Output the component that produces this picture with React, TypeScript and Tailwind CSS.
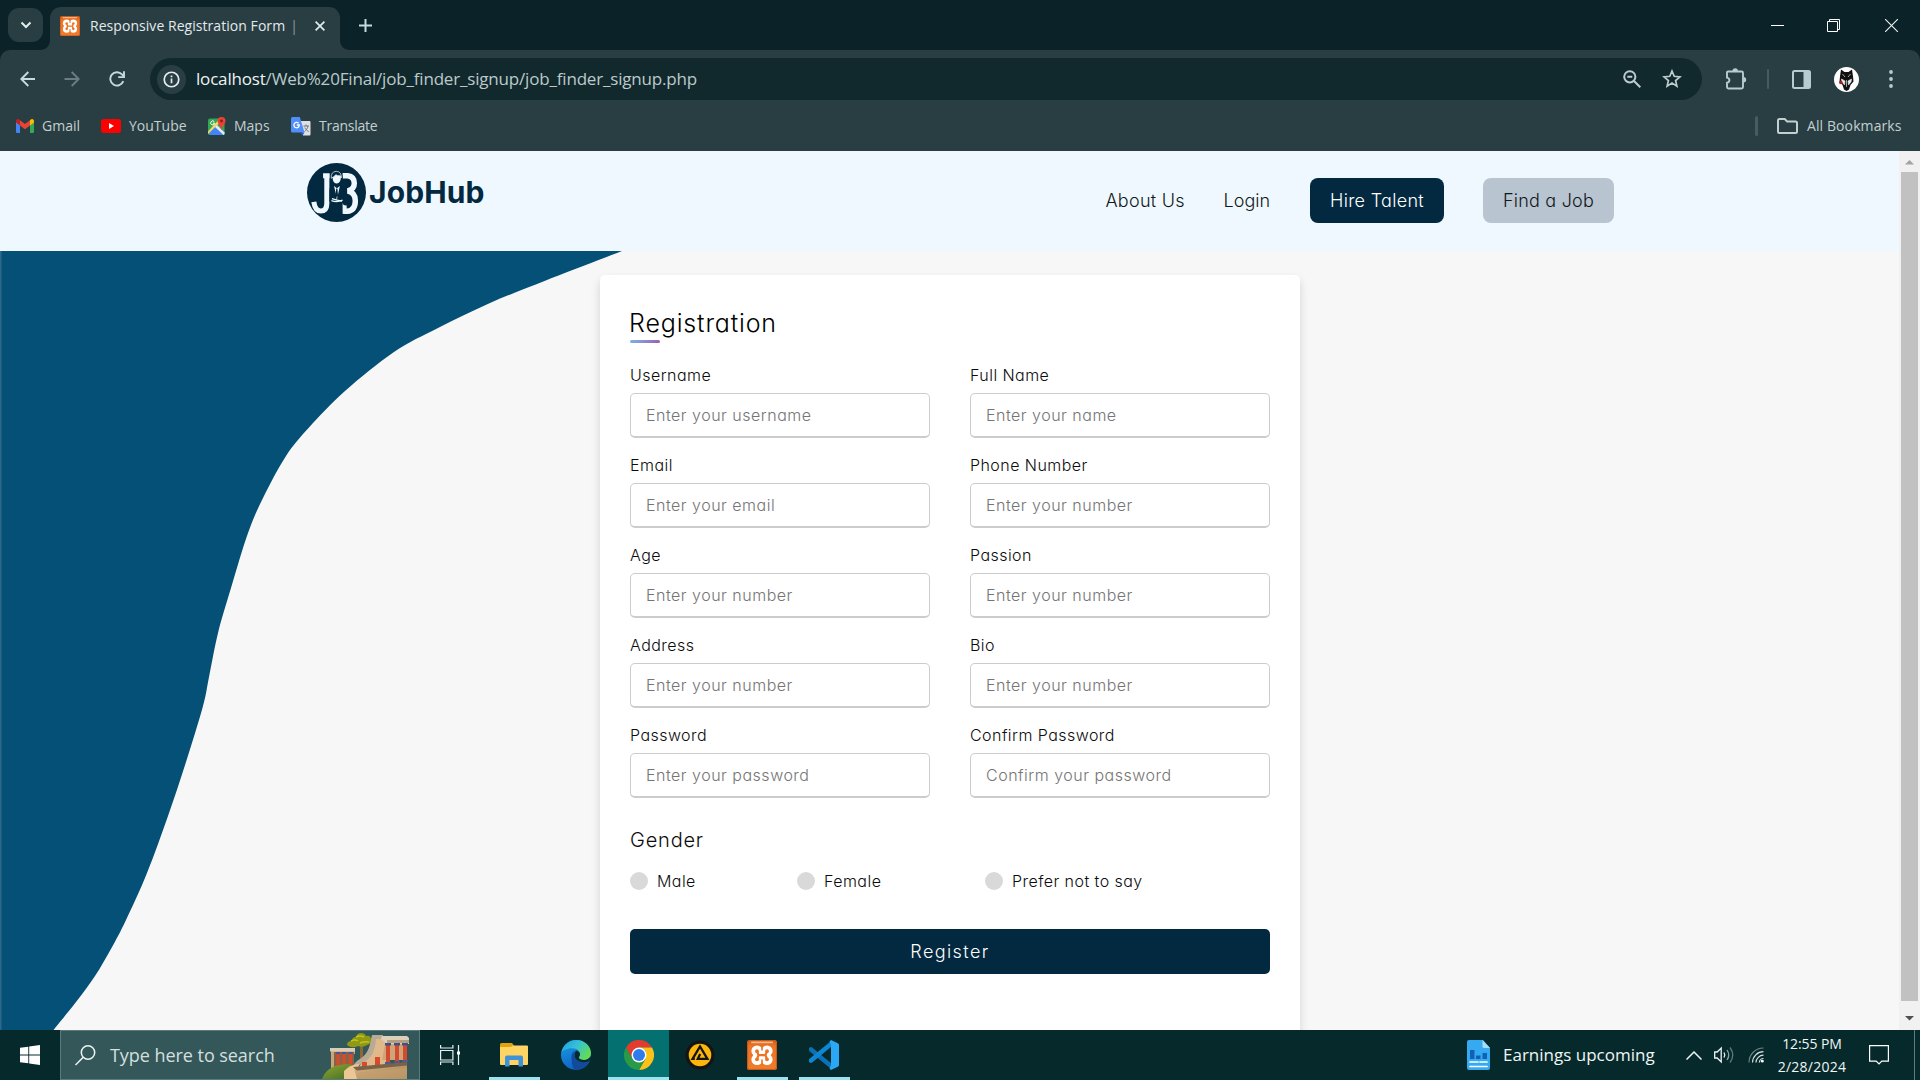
import type { ReactNode } from "react";

/* ---------- shared ---------- */

type Point = [number, number];

/** Smooth open curve through the given points. */
function smooth(points: Point[]): string {
  const at = (i: number) => points[Math.max(0, Math.min(points.length - 1, i))];
  let d = `M${points[0][0]} ${points[0][1]}`;
  for (let i = 0; i < points.length - 1; i++) {
    const [p0, p1, p2, p3] = [at(i - 1), at(i), at(i + 1), at(i + 2)];
    d += ` C${p1[0] + (p2[0] - p0[0]) / 6} ${p1[1] + (p2[1] - p0[1]) / 6} ${p2[0] - (p3[0] - p1[0]) / 6} ${p2[1] - (p3[1] - p1[1]) / 6} ${p2[0]} ${p2[1]}`;
  }
  return d;
}

function XamppIcon({ className }: { className: string }) {
  return (
    <svg viewBox="0 0 30 30" className={className}>
      <defs>
        <linearGradient id="xampp" x1="0" y1="0" x2="0" y2="1">
          <stop offset="0" stopColor="#c9601f" />
          <stop offset="0.2" stopColor="#ee7424" />
          <stop offset="1" stopColor="#f07c2c" />
        </linearGradient>
      </defs>
      <rect width="30" height="30" rx="2.5" fill="url(#xampp)" />
      <rect x="0.6" y="0.6" width="28.8" height="28.8" rx="2.2" fill="none" stroke="#c4561a" strokeWidth="1" />
      <rect x="4" y="1.6" width="22" height="1.6" rx="0.8" fill="#f7b586" />
      <g fill="#fff">
        <circle cx="10" cy="11" r="5.6" />
        <circle cx="20" cy="11" r="5.6" />
        <circle cx="10" cy="19.5" r="5.6" />
        <circle cx="20" cy="19.5" r="5.6" />
        <rect x="6" y="12" width="18" height="6.5" />
      </g>
      <g fill="#ee7424">
        <circle cx="10" cy="11.2" r="1.9" />
        <circle cx="20" cy="11.2" r="1.9" />
        <circle cx="10" cy="19.3" r="1.9" />
        <circle cx="20" cy="19.3" r="1.9" />
        <circle cx="4.6" cy="15.2" r="1" />
        <circle cx="25.4" cy="15.2" r="1" />
      </g>
      <path d="M10 11.2 11.5 15.2 10 19.3M20 11.2 18.5 15.2 20 19.3M11.5 15.2h7" fill="none" stroke="#ee7424" strokeWidth="2.2" />
      <path d="M15 5v5.600M15 25v-5.400" stroke="#ee7424" strokeWidth="1.600" />
    </svg>
  );
}

/* ---------- browser chrome ---------- */

function TabStrip() {
  return (
    <div className="flex h-[50px] items-end bg-[#0b2328]">
      <div className="mb-2 ml-2 flex h-[34px] w-[35px] items-center justify-center rounded-[11px] bg-[#293e43]">
        <svg viewBox="0 0 12 8" className="h-2 w-3 fill-none stroke-[#e4ecee] stroke-2">
          <path d="M1.500 1.500 6 6l4.500-4.500" />
        </svg>
      </div>
      <svg viewBox="0 0 10 10" className="ml-[-3px] size-[10px] fill-[#293e43]">
        <path d="M10 0v10H0C6 10 10 6 10 0Z" />
      </svg>
      <div className="flex h-[43px] w-[290px] items-center rounded-t-[11px] bg-[#293e43] pb-[6px] pt-0">
        <XamppIcon className="ml-[10px] size-5 shrink-0" />
        <div className="ml-[10px] w-[215px] shrink-0 overflow-hidden whitespace-nowrap text-[14px] leading-5 tracking-[0.05px] text-[#e3eaeb]">
          Responsive Registration Form<span className="ml-[5px] text-[#8e9a9d]">|</span>
        </div>
        <svg viewBox="0 0 10 10" className="ml-[10px] size-[10px] shrink-0 stroke-[#e4ecee] stroke-[1.7]">
          <path d="m.6.6 8.800 8.800M9.400.6.6 9.400" />
        </svg>
      </div>
      <svg viewBox="0 0 10 10" className="size-[10px] fill-[#293e43]">
        <path d="M0 0v10h10C4 10 0 6 0 0Z" />
      </svg>
      <svg viewBox="0 0 13 13" className="mb-[18px] ml-[9px] size-[13px] stroke-[#c3dbe0] stroke-2">
        <path d="M6.500 0v13M0 6.500h13" />
      </svg>
      <div className="mb-[18px] ml-auto mr-[22px] flex items-center gap-[43px]">
        <svg viewBox="0 0 13 13" className="size-[13px] stroke-white stroke-1">
          <path d="M0 6.500h13" />
        </svg>
        <svg viewBox="0 0 13 13" className="size-[13px] fill-none stroke-white stroke-1">
          <path d="M.5 2.500h10v10H.5zM2.500 2.500v-2h10v10h-2" />
        </svg>
        <svg viewBox="0 0 13 13" className="ml-[2px] size-[13px] stroke-[#eef2f2] stroke-[1.1]">
          <path d="m0 0 13 13M13 0 0 13" />
        </svg>
      </div>
    </div>
  );
}

function Toolbar() {
  return (
    <div className="bg-[#0b2328]">
      <div className="flex h-[58px] items-center rounded-t-[10px] bg-[#293e43]">
        <svg viewBox="0 0 16 16" className="ml-5 size-4 shrink-0 fill-none stroke-[#c3dbe0] stroke-[1.9]">
          <path d="M15 8H1.600M8.300 1 1.300 8l7 7" />
        </svg>
        <svg viewBox="0 0 16 16" className="ml-[28px] size-4 shrink-0 fill-none stroke-[#6b7d81] stroke-[1.9]">
          <path d="M.5 8h13.900M7.700 1l7 7-7 7" />
        </svg>
        <svg viewBox="0 0 16 16" className="ml-[29px] size-4 shrink-0 fill-none stroke-[#c3dbe0] stroke-[1.9]">
          <path d="M14.300 10.200A6.700 6.700 0 1 1 13 3.400l1.800 2" />
          <path d="M15 .2v5.900H9.200" />
        </svg>
        <div className="ml-[25px] flex h-[42px] w-[1552px] shrink-0 items-center rounded-full bg-[#11292d]">
          <div className="ml-[7px] flex size-[29px] shrink-0 items-center justify-center rounded-full bg-[#293e43]">
            <svg viewBox="0 0 18 18" className="size-[17px] fill-none stroke-[#e6ecee] stroke-[1.8]">
              <circle cx="9" cy="9" r="7.700" />
              <path d="M9 8v5M9 4.800v1.900" />
            </svg>
          </div>
          <div className="ml-[10px] whitespace-nowrap text-[17px] leading-6 tracking-[-0.18px] text-[#bcc9cb]">
            <span className="text-[#eef2f3]">localhost</span>/Web%20Final/job_finder_signup/job_finder_signup.php
          </div>
          <svg viewBox="0 0 18 18" className="ml-auto size-[18px] fill-none stroke-[#bccbcd] stroke-2">
            <circle cx="6.800" cy="6.800" r="5.600" />
            <path d="m11 11 6.300 6.300M4.300 6.800h5" />
          </svg>
          <svg viewBox="0 0 20 20" className="ml-[21px] mr-[20px] size-5 fill-none stroke-[#bccbcd] stroke-[1.7]">
            <path d="m10 2 2.200 5.300 5.700.5-4.300 3.700 1.300 5.600-4.900-3-4.900 3 1.300-5.600L2.100 7.800l5.700-.5Z" />
          </svg>
        </div>
        <svg viewBox="0 0 22 22" className="ml-[23px] size-[22px] shrink-0">
          <path
            d="M3 3.500h13.500A1.500 1.500 0 0 1 18 5v14a1.500 1.500 0 0 1-1.500 1.500H3.500A1.500 1.500 0 0 1 2 19v-4.200c3.200-.6 3.200-4.600 0-5.200V4.500a1 1 0 0 1 1-1Z"
            fill="none"
            stroke="#b5cdd2"
            strokeWidth="1.900"
          />
          <path d="M7.500 3a2.700 2.700 0 0 1 5.400 0ZM18.500 9a2.700 2.700 0 0 1 0 5.400Z" fill="#b5cdd2" />
        </svg>
        <div className="ml-[20px] h-5 w-[2px] shrink-0 rounded bg-[#465c61]" />
        <svg viewBox="0 0 19 19" className="ml-[23px] size-[19px] shrink-0">
          <rect x="1" y="1" width="17" height="17" rx="1.500" fill="none" stroke="#b5cdd2" strokeWidth="2" />
          <path d="M11.500 1H18v17h-6.500z" fill="#b5cdd2" />
        </svg>
        <svg viewBox="0 0 25 25" className="ml-[23px] size-[25px] shrink-0">
          <circle cx="12.500" cy="12.500" r="12.500" fill="#fff" />
          <path d="M7 2.500 10.500 5h4L18 2.500l1 7 .5 5-3 3.500-1.500 4.500-2.500 1.500L10 22.500 8.500 18l-3-3.500.5-5Z" fill="#111" />
          <path d="m7.500 12 3.500 2-.5 4-2.500-3ZM17.500 12 14 14l.5 4 2.500-3ZM8.500 7l2.500 3M16.500 7 14 10M12.500 13v7" fill="#eee" stroke="#ddd" strokeWidth=".7" />
          <circle cx="6.800" cy="15.500" r="1.800" fill="#a32020" />
        </svg>
        <svg viewBox="0 0 4 18" className="ml-[30px] h-[18px] w-1 shrink-0 fill-[#b5cdd2]">
          <circle cx="2" cy="2" r="1.900" />
          <circle cx="2" cy="9" r="1.900" />
          <circle cx="2" cy="16" r="1.900" />
        </svg>
      </div>
    </div>
  );
}

function BookmarksBar() {
  return (
    <div className="flex h-[43px] items-center whitespace-nowrap bg-[#293e43] pb-[7px] text-[14px] leading-5 text-[#c3cfd1]">
      <svg viewBox="0 0 18 14" className="ml-4 h-[14px] w-[18px]">
        <path d="M0 2.500V13a1 1 0 0 0 1 1h3V5.500Z" fill="#4285f4" />
        <path d="M18 2.500V13a1 1 0 0 1-1 1h-3V5.500Z" fill="#34a853" />
        <path d="M14 1.200V6.500l4-3V2a2 2 0 0 0-3.200-1.500Z" fill="#fbbc04" />
        <path d="M4 6.500V1.200l5 3.800 5-3.800v5.300l-5 3.800Z" fill="#ea4335" />
        <path d="M0 2v1.500l4 3V1.200L3.200.5A2 2 0 0 0 0 2Z" fill="#c5221f" />
      </svg>
      <span className="ml-2 w-[43px]">Gmail</span>
      <svg viewBox="0 0 20 14" className="ml-4 h-[14px] w-5">
        <rect width="20" height="14" rx="3" fill="#f00" />
        <path d="m8 4 5 3-5 3Z" fill="#fff" />
      </svg>
      <span className="ml-2 w-[63px]">YouTube</span>
      <svg viewBox="0 0 18 18" className="ml-4 size-[18px]">
        <rect y="1.500" width="16.500" height="16.500" rx="2" fill="#34a853" />
        <path d="M0 16 8.500 8 16.500 15v1.500L15 18H2Z" fill="#4285f4" />
        <path d="M0 14.500V17L13 4.500 10.500 3Z" fill="#fdd663" />
        <path d="m7 10 2-2 7.500 7.500V17a1 1 0 0 1-1 1Z" fill="#e8eaed" />
        <path d="M13.500 0a4 4 0 0 1 4 4c0 2.600-3 4-3.500 8.500h-1C12.500 8 9.500 6.600 9.500 4a4 4 0 0 1 4-4Z" fill="#ea4335" />
        <circle cx="13.500" cy="4" r="1.400" fill="#8c1d18" />
        <path d="M6.300 4.700a2 2 0 1 0 .4 1.500H4.800" fill="none" stroke="#fff" strokeWidth="1" />
      </svg>
      <span className="ml-[8px] w-[41px]">Maps</span>
      <svg viewBox="0 0 20 19" className="ml-[16px] h-[19px] w-5">
        <path d="M9 4h9.500a1 1 0 0 1 1 1v12.500a1 1 0 0 1-1 1H12Z" fill="#dfe1e5" />
        <path d="M1.500 0h7.300l4.700 15.500h-12A1.500 1.500 0 0 1 0 14V1.500A1.500 1.500 0 0 1 1.500 0Z" fill="#4f8ff7" />
        <path d="m9 15.500h4.500l-2 3Z" fill="#2a56c6" />
        <path d="M7.600 6.300A2.700 2.700 0 1 0 8.300 8H5.800" fill="none" stroke="#fff" strokeWidth="1.300" />
        <path d="M12.500 9h5.500M15 7.500V9M17 9c-.5 2.500-2 4.500-3.500 5.500M13.800 10.500c.8 1.800 2.200 3.200 4 4" fill="none" stroke="#70767c" strokeWidth="1" />
      </svg>
      <span className="ml-[8px] tracking-[-0.25px]">Translate</span>
      <div className="ml-auto h-5 w-[3px] rounded bg-[#465c61]" />
      <svg viewBox="0 0 21 16" className="ml-[19px] h-4 w-[21px] fill-none stroke-[#c3cfd1] stroke-2">
        <path d="M2.500 1h5.200l2.500 2.500h8.300A1.500 1.500 0 0 1 20 5v8.500a1.500 1.500 0 0 1-1.500 1.500h-16A1.500 1.500 0 0 1 1 13.500v-11A1.500 1.500 0 0 1 2.500 1Z" />
      </svg>
      <span className="ml-[9px] mr-[18px] w-[95px] tracking-[0.1px]">All Bookmarks</span>
    </div>
  );
}

/* ---------- web page ---------- */

function JobHubLogo() {
  return (
    <svg viewBox="0 0 58 58" className="size-[59px]">
      <circle cx="29" cy="29" r="29" fill="#02293f" />
      <g fill="none" stroke="#f0f8ff">
        <path d="M15.800 12.500h6.500M19.500 10.200v29q0 8-6 8-5.500 0-6.800-9" strokeWidth="5" />
        <path d="M35 12.500h5q6.500.7 6.500 7.500 0 6-6.500 7.500 7.500 1.500 7.500 9.500 0 9.500-8 10.500h-3.500" strokeWidth="5.400" />
        <path d="M37 39v11" strokeWidth="4" />
      </g>
      <path d="M22 27q0-4.500 5.500-6t8.500 6l.5 11-3.500 2H25l-3-2Z" fill="#02293f" />
      <circle cx="37.500" cy="20.700" r="4.200" fill="#02293f" />
      <circle cx="38.500" cy="37.500" r="4.200" fill="#02293f" />
      <circle cx="29" cy="14" r="6" fill="#02293f" />
      <path d="M25 13.500q0-3.500 3.800-4t4.700 3.500l-.6 4q-1.400 3.200-3.800 3.200t-3.600-3.200Z" fill="#f0f8ff" />
      <path d="M23.800 15q-.5-6.500 5-6.800 5.200.3 5 6.300l-1-2q-3 .5-4.500-1-1.500 2-4.500 3.500Z" fill="#02293f" stroke="#f0f8ff" strokeWidth=".7" />
      <path d="m26.500 22.500 2 8 .7 6.500 1.500-7 1.600-7.500-2.800 2.300Z" fill="#f0f8ff" />
      <path d="M28.700 25h1.200l.6 7-1.100 2.500-1.200-2.500Z" fill="#02293f" />
      <path d="M24 37q5.500 2 11-.5M24.500 35q5 1.500 10 2.500" fill="none" stroke="#f0f8ff" strokeWidth="1.200" />
    </svg>
  );
}

function SiteHeader() {
  return (
    <header className="flex h-[100px] w-full shrink-0 items-start bg-[#f0f8ff] text-[18px] font-light leading-[45px] text-[#101820]">
      <div className="ml-[307px] mt-[12px] flex items-center">
        <JobHubLogo />
        <span className="ml-[3px] mt-[-1px] text-[30px] font-bold leading-[40px] tracking-[0.1px] text-[#02293f]">JobHub</span>
      </div>
      <nav className="ml-auto mr-[285px] mt-[27px] flex whitespace-nowrap">
        <a className="w-[118px] tracking-[0.25px]">About Us</a>
        <a className="w-[86.5px] tracking-[0.05px]">Login</a>
        <a className="mr-[39px] w-[134px] rounded-[8px] bg-[#02293f] text-center tracking-[0.3px] text-white">Hire Talent</a>
        <a className="w-[131px] rounded-[8px] bg-[#b8c4d0] text-center tracking-[0.2px]">Find a Job</a>
      </nav>
    </header>
  );
}

const WAVE: Point[] = [
  [622, 0], [547, 29], [490, 52], [438, 77], [394, 101], [345, 140], [309, 176.5], [286, 205], [263, 247], [248, 282],
  [231, 337], [218, 382], [209, 426], [203, 455], [186, 511], [168, 565], [147, 622], [126, 669], [111.5, 697],
  [95, 725], [76, 751], [53.5, 779],
];

function Wave() {
  return (
    <svg viewBox="0 0 640 779" className="absolute left-0 top-0 h-[779px] w-[640px]">
      <path d={`${smooth(WAVE)} L0 779 L0 0 Z`} fill="#045076" />
      <path d="M0 0h1.500v779H0z" fill="#2c688a" />
    </svg>
  );
}

const FIELDS = [
  ["Username", "Enter your username"],
  ["Full Name", "Enter your name"],
  ["Email", "Enter your email"],
  ["Phone Number", "Enter your number"],
  ["Age", "Enter your number"],
  ["Passion", "Enter your number"],
  ["Address", "Enter your number"],
  ["Bio", "Enter your number"],
  ["Password", "Enter your password"],
  ["Confirm Password", "Confirm your password"],
];

function Field({ label, placeholder }: { label: string; placeholder: string }) {
  return (
    <label className="block">
      <span className="mb-[6px] block h-6 leading-6 tracking-[0.45px]">{label}</span>
      <input
        placeholder={placeholder}
        className="block h-[45px] w-[300px] rounded-[5px] border border-b-2 border-[#ccc] bg-white pb-px pl-[15px] tracking-[0.5px] placeholder:text-[#757575] placeholder:opacity-100"
      />
    </label>
  );
}

function Radio({ label, className }: { label: string; className: string }) {
  return (
    <label className={className}>
      <span className="size-[18px] shrink-0 rounded-full bg-[#d9d9d9]" />
      <span className="ml-[9px]">{label}</span>
    </label>
  );
}

function RegistrationCard() {
  return (
    <form className="relative ml-[600px] mt-6 h-[800px] w-[700px] shrink-0 rounded-[5px] bg-white px-[30px] pt-[30px] text-[16px] font-light text-[#0c0c0c] shadow-[0_5px_10px_rgba(0,0,0,0.15)]">
      <h1 className="relative mb-5 h-[38px] text-[25px] leading-9 tracking-[0.85px] text-black after:absolute after:bottom-0 after:left-0 after:h-[3px] after:w-[30px] after:rounded-[5px] after:bg-linear-135 after:from-[#71b7e6] after:to-[#9b59b6]">
        <span className="-ml-px">Registration</span>
      </h1>
      <div className="grid grid-cols-[300px_300px] gap-x-10 gap-y-[15px]">
        {FIELDS.map(([label, placeholder]) => (
          <Field key={label} label={label} placeholder={placeholder} />
        ))}
      </div>
      <h2 className="mt-[28px] h-7 text-[20px] leading-7 tracking-[0.8px]">Gender</h2>
      <div className="mt-[15px] flex h-6 items-center whitespace-nowrap tracking-[0.45px]">
        <Radio label="Male" className="flex w-[167px] items-center" />
        <Radio label="Female" className="flex w-[188px] items-center" />
        <Radio label="Prefer not to say" className="flex items-center" />
      </div>
      <button type="button" className="mt-9 block h-[45px] w-full rounded-[5px] bg-[#02293f] text-[18px] font-light tracking-[1.4px] text-white">
        Register
      </button>
    </form>
  );
}

function ScrollBar() {
  return (
    <div className="flex w-[21px] shrink-0 flex-col items-center bg-[#f1f1f1]">
      <svg viewBox="0 0 21 21" className="size-[21px] shrink-0 fill-[#a3a3a3]">
        <path d="m6 13.500 4.500-4.500 4.500 4.500Z" />
      </svg>
      <div className="w-[17px] flex-1 bg-[#c1c1c1]" />
      <svg viewBox="0 0 21 29" className="h-[29px] w-[21px] shrink-0 fill-[#505050]">
        <path d="m6 15 4.500 4.500L15 15Z" />
      </svg>
    </div>
  );
}

/* ---------- taskbar ---------- */

function SearchArt() {
  return (
    <svg viewBox="0 0 88 48" className="mr-[9px] h-12 w-[88px] shrink-0 self-end">
      <defs>
        <linearGradient id="hill" x1="0" y1="0" x2="1" y2="1">
          <stop offset="0" stopColor="#8fa832" />
          <stop offset="1" stopColor="#3f6a22" />
        </linearGradient>
        <linearGradient id="wall" x1="0" y1="0" x2="1" y2="1">
          <stop offset="0" stopColor="#d9b886" />
          <stop offset="1" stopColor="#a57f52" />
        </linearGradient>
      </defs>
      <path d="M9 18h24v5H31v15H9Z" fill="#c9a676" />
      <path d="M8 17h25v3.500H8Z" fill="#d9cdb8" />
      <path d="M12 21h20v16H12Z" fill="#8a6248" />
      <path d="M14.500 21h3v15h-3zM20.500 21h3v15h-3zM27 21h3v14h-3z" fill="#d9492b" />
      <path d="M14 21h4v2h-4zM20 21h4v2h-4zM26.500 21h4v2h-4z" fill="#4a5596" />
      <path d="M38 14h3v16h-3z" fill="#8a6a30" />
      <path d="M25 14q0-4 5-4 0-4 4-4 1-4 5-4 4 0 5 3 5-1 5 4 1 4-4 5-4 3-9 1-6 3-11-1Z" fill="#8f9a12" />
      <path d="M29 10q4-2 7 0M34 6q4-2 8 0M38 12q5-2 9-1" stroke="#c5c21c" strokeWidth="1.500" fill="none" />
      <path d="M0 48Q5 33 28 33q8 4 8 15Z" fill="url(#hill)" />
      <path d="M50 5h15v29l-28 2 5-8Q47 22 50 5Z" fill="#e0b98a" />
      <path d="M50 4h11l-1 4h-6q-1 16-10 22-8 4-12 10l-3-1q4-9 9-11 10-6 12-24Z" fill="#b8aa94" />
      <path d="M60 5h25l2 2v6H65l-6-5Z" fill="#ddd0bb" />
      <path d="M65 9h22v3H65z" fill="#b3a083" />
      <path d="M63 13h22v16H60Z" fill="#cfa477" />
      <path d="M64 14h4v17h-4zM73 14h4v16h-4zM81 13h4v16h-4z" fill="#d34a2e" />
      <path d="M63 12h6v2.500h-6zM72 12h6v2.500h-6zM80 12h6v2.500h-6z" fill="#43508c" />
      <path d="M63 31h6v2h-6zM72 30h6v2h-6zM80 29h6v2h-6z" fill="#4d5a96" />
      <path d="M40 31h5v7h-5zM53 26h5v10h-5z" fill="#d9492b" />
      <path d="M22 48V40q5-6 15-7l-2 15Z" fill="#ecc695" />
      <path d="M32 37 85 32v16H35Z" fill="url(#wall)" />
      <path d="m31 36 54-5v3.500l-50 5Z" fill="#7a6248" />
      <path d="M38 42 85 37v11H38Z" fill="#c4a070" opacity=".6" />
    </svg>
  );
}

function ExplorerIcon() {
  return (
    <svg viewBox="0 0 28 24" className="h-6 w-7">
      <path d="M0 1.500A1.500 1.500 0 0 1 1.500 0H12l2 2.500V6H0Z" fill="#e0a30c" />
      <path d="M0 4h10.500l3-1.500H27a1 1 0 0 1 1 1V21a1 1 0 0 1-1 1H1a1 1 0 0 1-1-1Z" fill="#ffd463" />
      <path d="M5 23.500V14.500a2 2 0 0 1 2-2h14a2 2 0 0 1 2 2v9h-4.500V17h-9v6.500Z" fill="#3f92d8" />
    </svg>
  );
}

function EdgeIcon() {
  return (
    <svg viewBox="0 0 30 30" className="size-[30px]">
      <defs>
        <linearGradient id="edgeTop" x1="0" y1="0" x2="1" y2="0.6">
          <stop offset="0" stopColor="#1b9de2" />
          <stop offset="0.5" stopColor="#35c1d8" />
          <stop offset="1" stopColor="#62dc54" />
        </linearGradient>
        <linearGradient id="edgeLeft" x1="0" y1="0" x2="0.4" y2="1">
          <stop offset="0" stopColor="#1aa0e8" />
          <stop offset="1" stopColor="#0f62c4" />
        </linearGradient>
      </defs>
      <circle cx="15" cy="15" r="15" fill="url(#edgeLeft)" />
      <path d="M.5 12.500C2 5 8 0 15.500 0 24 0 30 6.500 30 13c0 4.500-3 7-7 7-3.200 0-5.200-1-5.200-2.200 0-1 1.200-1.500 1.200-3.600 0-3.200-3-6-7.500-6C6.500 8.200 2 10 .5 12.500Z" fill="url(#edgeTop)" />
      <path d="M10.500 17c0-3 1.500-5.200 3.700-6.200C12 14 13 21 21 22c3 .3 5.500-.6 7.500-2C26 26 21 30 15 30c-3 0-4.500-6-4.500-13Z" fill="#124a9c" />
      <path d="M17.800 17.800C17.800 19 20 20 23 20c3 0 5.500-1.500 6.500-4l.5 3-1.500 2c-2 1-4.500 1.500-7.500 1-5-.7-7.500-3.700-7.500-7 0-2.500 1-4 2-4.400 2.200.8 3.500 2 3.500 3.700 0 1.800-1.200 2.500-1.200 3.500Z" fill="#072a2c" />
    </svg>
  );
}

function ChromeIcon() {
  return (
    <svg viewBox="0 0 30 30" className="size-[30px]">
      <path d="M2 7.500A15 15 0 0 1 28 7.500H15L8.500 18.750Z" fill="#e33b2e" />
      <path d="M28 7.500A15 15 0 0 1 15 30l6.500-11.250L21.500 11 15 7.500Z" fill="#fbc116" />
      <path d="M15 30A15 15 0 0 1 2 7.500L8.500 18.750 15 22.500l6.500-3.750Z" fill="#2b9a46" />
      <circle cx="15" cy="15" r="7.500" fill="#fff" />
      <circle cx="15" cy="15" r="6" fill="#2f7bec" />
    </svg>
  );
}

function AimpIcon() {
  return (
    <svg viewBox="0 0 30 30" className="size-[30px]">
      <circle cx="15" cy="15" r="14.500" fill="#141414" />
      <circle cx="15" cy="15" r="11.300" fill="#fbb80a" />
      <path d="M9.800 18.800H7.600L15 6.500l7.400 12.300h-9.600l2.400-4.800" fill="none" stroke="#141414" strokeWidth="2.300" />
    </svg>
  );
}

function VsCodeIcon() {
  return (
    <svg viewBox="0 0 30 30" className="size-[30px]">
      <path d="m2 9.500 20 16.500" stroke="#0a70b8" strokeWidth="4.600" strokeLinecap="round" />
      <path d="M2 20.500 22 4" stroke="#0f86d2" strokeWidth="4.600" strokeLinecap="round" />
      <path d="M22 0 28.800 3.200A2 2 0 0 1 30 5v20a2 2 0 0 1-1.200 1.800L22 30l-1.500-1.500L22 25V5l-1.500-3.500Z" fill="#2ba7f3" />
    </svg>
  );
}

function TaskButton({ children, state }: { children: ReactNode; state: "idle" | "open" | "active" }) {
  return (
    <div className={state === "active" ? "flex h-full w-[61px] flex-col items-center bg-[#04706f]" : "flex h-full w-[62px] flex-col items-center"}>
      <div className="flex h-[47px] items-center pt-[3px]">{children}</div>
      {state === "open" && <div className="h-[3px] w-[51px] bg-[#9be4ef]" />}
      {state === "active" && <div className="h-[3px] w-full bg-[#9be4ef]" />}
    </div>
  );
}

function Taskbar() {
  return (
    <footer className="flex h-[50px] items-center whitespace-nowrap bg-[#062a2b] text-white">
      <svg viewBox="0 0 20 20" className="ml-5 size-5 shrink-0 fill-white">
        <path d="M0 2.800 8.300 1.700v7.800H0ZM9.200 1.500 20 0v9.500H9.200ZM0 10.400h8.300v7.900L0 17.200ZM9.200 10.400H20V20L9.200 18.500Z" />
      </svg>
      <div className="ml-5 flex h-[50px] w-[360px] shrink-0 items-center border border-[#5a7b7c] bg-[#345859]">
        <svg viewBox="0 0 21 21" className="ml-[14px] size-[21px] shrink-0 fill-none stroke-[#eef3f3] stroke-[1.5]">
          <circle cx="13" cy="7.500" r="6.700" />
          <path d="M8.200 12.300.5 20" />
        </svg>
        <span className="ml-[14px] text-[18px] leading-6 tracking-[-0.05px] text-[#d4dfdf]">Type here to search</span>
        <span className="flex-1" />
        <SearchArt />
      </div>
      <svg viewBox="0 0 20 20" className="ml-5 size-5 shrink-0 fill-none stroke-[#e8eeee] stroke-[1.2]">
        <path d="M.6 5.500h12.300v9.500H.6zM.6 0v3h12.300V0M.6 20v-3h12.300v3M18.500 0v20" />
        <path d="M17 6.500h3v3h-3z" fill="#fff" stroke="none" />
      </svg>
      <div className="ml-[23px] flex h-full">
        <TaskButton state="open"><ExplorerIcon /></TaskButton>
        <TaskButton state="idle"><EdgeIcon /></TaskButton>
        <div className="w-px" />
        <TaskButton state="active"><ChromeIcon /></TaskButton>
        <TaskButton state="idle"><AimpIcon /></TaskButton>
        <TaskButton state="open"><XamppIcon className="size-[30px]" /></TaskButton>
        <TaskButton state="open"><VsCodeIcon /></TaskButton>
      </div>
      <svg viewBox="0 0 24 30" className="ml-auto h-[30px] w-6 shrink-0">
        <path d="M2 0h14l7 8v20a2 2 0 0 1-2 2H2a2 2 0 0 1-2-2V2a2 2 0 0 1 2-2Z" fill="#36aaf0" />
        <path d="M15.500 0 23 8h-6a1.500 1.500 0 0 1-1.500-1.500Z" fill="#a8dcfa" />
        <path d="M3 10h4.500v9H3zM9 15.500h4.500V19H9zM15.500 13H20v6h-4.500z" fill="#0f62b8" />
        <path d="M3 22h8M13 22h7M3 26.500h17" stroke="#fff" strokeWidth="1.700" strokeLinecap="round" />
      </svg>
      <span className="ml-[12px] w-[157px] text-[17px] leading-6 text-[#f0f5f5]">Earnings upcoming</span>
      <svg viewBox="0 0 16 9" className="ml-[26px] h-[9px] w-4 shrink-0 fill-none stroke-[#eef3f3] stroke-[1.5]">
        <path d="M.5 8.500 8 1l7.500 7.500" />
      </svg>
      <svg viewBox="0 0 21 18" className="ml-3 h-[18px] w-[21px] shrink-0 fill-none stroke-[#eef3f3] stroke-[1.3]">
        <path d="M.7 6v6h2.500l4 4V2l-4 4ZM10 6.500q1.600 2.500 0 5" />
        <path d="M13 4q3.500 5 0 10" stroke="#8fa5a6" />
        <path d="M16 1.500q5.500 7.500 0 15" stroke="#5d797a" />
      </svg>
      <svg viewBox="0 0 17 16" className="ml-[13px] h-4 w-[17px] shrink-0 fill-none">
        <path d="M1 15.500A14.500 14.500 0 0 1 15.500 1" stroke="#6e8788" strokeWidth="1.100" />
        <path d="M4.500 15.500A11 11 0 0 1 15.500 4.700M8 15.500a7.500 7.500 0 0 1 7.500-7.300" stroke="#d8e1e1" strokeWidth="1.200" />
        <path d="M11.300 15.500a4.200 4.200 0 0 1 4.200-4" stroke="#d8e1e1" strokeWidth="1.200" />
        <circle cx="14.300" cy="14.200" r="1.400" fill="#fff" />
      </svg>
      <div className="ml-[11px] flex w-[72px] flex-col items-center text-[14px] leading-[23px] text-[#f0f5f5]">
        <span className="tracking-[-0.1px]">12:55 PM</span>
        <span className="tracking-[0.25px]">2/28/2024</span>
      </div>
      <svg viewBox="0 0 20 20" className="ml-[21px] mr-[25px] size-5 shrink-0 fill-none stroke-white stroke-[1.2]">
        <path d="M.6.6h18.800v15.500h-6.600L10 19l-2.800-2.900H.6Z" />
      </svg>
      <div className="mr-[5px] h-full w-px bg-[#5d7b7c]" />
    </footer>
  );
}

export default function App() {
  return (
    <div className="flex h-[1080px] w-[1920px] flex-col overflow-hidden font-['Open_Sans',sans-serif]">
      <TabStrip />
      <Toolbar />
      <BookmarksBar />
      <main className="flex min-h-0 flex-1">
        <div className="flex min-w-0 flex-1 flex-col overflow-hidden font-['Inter',sans-serif] [font-feature-settings:'cv11']">
          <SiteHeader />
          <div className="relative flex min-h-0 flex-1 flex-col overflow-hidden bg-[#f7f7f7]">
            <Wave />
            <RegistrationCard />
          </div>
        </div>
        <ScrollBar />
      </main>
      <Taskbar />
    </div>
  );
}
